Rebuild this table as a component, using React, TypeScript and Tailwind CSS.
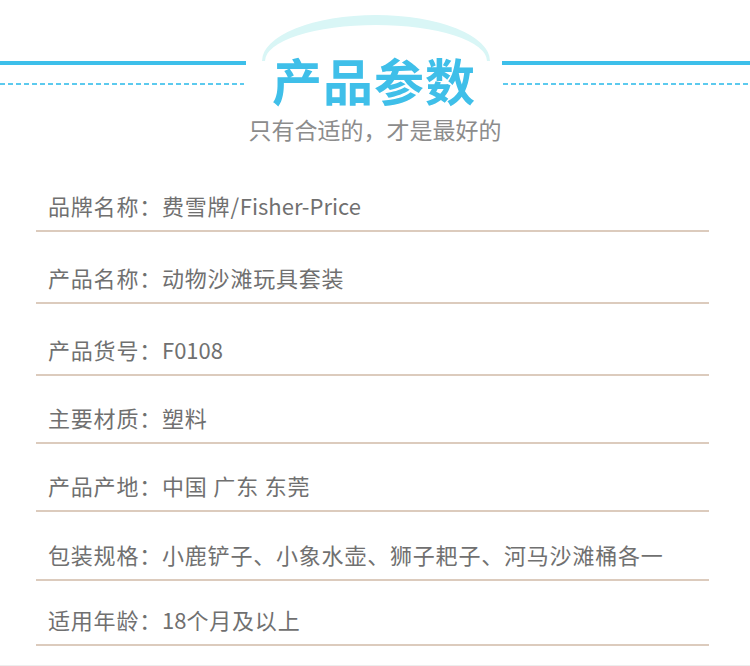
const rows = [
  { label: '品牌名称：', value: '费雪牌/Fisher-Price', pad: 'pt-[30px]' },
  { label: '产品名称：', value: '动物沙滩玩具套装', pad: 'pt-[30px]' },
  { label: '产品货号：', value: 'F0108', pad: 'pt-[30px]' },
  { label: '主要材质：', value: '塑料', pad: 'pt-[26px]' },
  { label: '产品产地：', value: '中国 广东 东莞', pad: 'pt-[26px]' },
  { label: '包装规格：', value: '小鹿铲子、小象水壶、狮子耙子、河马沙滩桶各一', pad: 'pt-[27px]' },
  { label: '适用年龄：', value: '18个月及以上', pad: 'pt-[23px]' },
];

const font = { fontFamily: '"Noto Sans CJK SC", "Noto Sans", sans-serif' };

// latin runs keep normal spacing, CJK gets a little extra
function Value({ text }: { text: string }) {
  const parts = text.split(/([A-Za-z0-9-]+)/);
  return (
    <>
      {parts.map((p, i) =>
        /^[A-Za-z0-9-]+$/.test(p) ? (
          <span key={i} className="tracking-normal">{p}</span>
        ) : (
          <span key={i}>{p}</span>
        )
      )}
    </>
  );
}

function Header() {
  return (
    <div className="relative h-[160px]">
      {/* light arc behind the title */}
      <svg className="absolute left-[258px] top-[12px]" width="236" height="50" viewBox="0 0 236 50">
        <path d="M4 49 A114 46 0 0 1 232 49 L229 49 A111 36 0 0 0 7 49 Z" fill="#d9f6f6" />
      </svg>

      <div className="grid grid-cols-[246px_256px_1fr] pt-[61px]">
        <div>
          <div className="h-[4px] bg-[#3dbfea]" />
          <div className="mt-[18px] h-[2px] w-[244px] bg-[repeating-linear-gradient(to_right,#5ccaee_0_5px,transparent_5px_8px)]" />
        </div>
        <div className="relative flex justify-center bg-white">
          <div className="-mt-[7px] text-[50px] leading-[50px] font-bold text-[#3fbfe9] tracking-[1px]" style={font}>
            产品参数
          </div>
        </div>
        <div>
          <div className="h-[4px] bg-[#3dbfea]" />
          <div className="mt-[18px] ml-[1px] h-[2px] bg-[repeating-linear-gradient(to_right,#5ccaee_0_5px,transparent_5px_8px)]" />
        </div>
      </div>

      <div className="mt-[10px] text-center text-[23px] leading-[30px] text-[#8c8c8c]" style={font}>
        只有合适的，才是最好的
      </div>
    </div>
  );
}

export default function App() {
  return (
    <div className="w-[750px] h-[666px] bg-white overflow-hidden" style={font}>
      <Header />
      <div className="ml-[36px] mr-[41px]">
        {rows.map((row) => (
          <div key={row.label} className={`${row.pad} pb-[10px] border-b-2 border-[#dccbbd]`}>
            <div className="pl-[12px] text-[22px] tracking-[0.8px] leading-[30px] text-[#707070] whitespace-nowrap">
              {row.label}
              <Value text={row.value} />
            </div>
          </div>
        ))}
      </div>
      <div className="mt-[19px] border-t border-[#ededed]" />
    </div>
  );
}
